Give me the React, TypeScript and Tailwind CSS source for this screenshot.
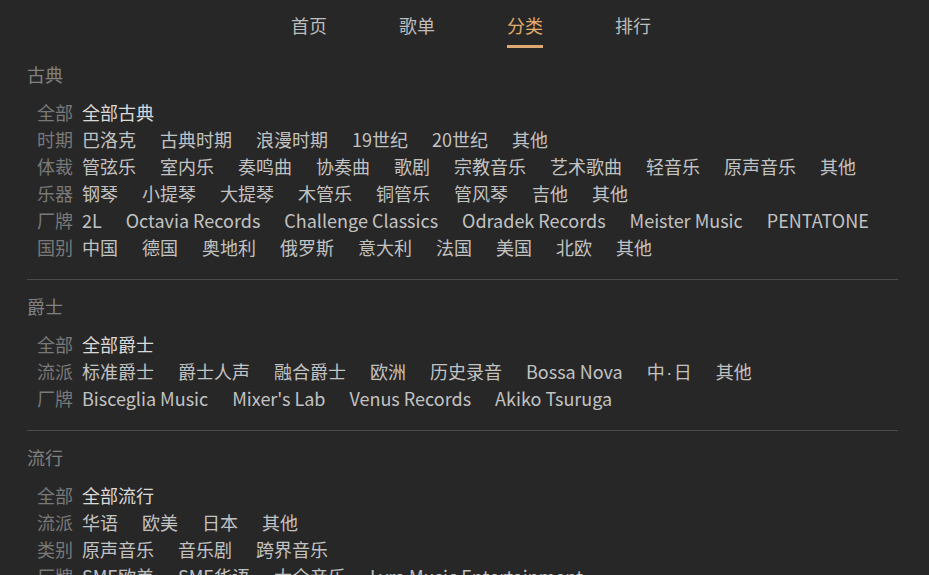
import React from "react";

type Row = { label: string; items: string[] };
type Section = { title: string; rows: Row[] };

const sections: Section[] = [
  {
    title: "古典",
    rows: [
      { label: "全部", items: ["全部古典"] },
      { label: "时期", items: ["巴洛克", "古典时期", "浪漫时期", "19世纪", "20世纪", "其他"] },
      {
        label: "体裁",
        items: ["管弦乐", "室内乐", "奏鸣曲", "协奏曲", "歌剧", "宗教音乐", "艺术歌曲", "轻音乐", "原声音乐", "其他"],
      },
      { label: "乐器", items: ["钢琴", "小提琴", "大提琴", "木管乐", "铜管乐", "管风琴", "吉他", "其他"] },
      {
        label: "厂牌",
        items: ["2L", "Octavia Records", "Challenge Classics", "Odradek Records", "Meister Music", "PENTATONE"],
      },
      { label: "国别", items: ["中国", "德国", "奥地利", "俄罗斯", "意大利", "法国", "美国", "北欧", "其他"] },
    ],
  },
  {
    title: "爵士",
    rows: [
      { label: "全部", items: ["全部爵士"] },
      { label: "流派", items: ["标准爵士", "爵士人声", "融合爵士", "欧洲", "历史录音", "Bossa Nova", "中·日", "其他"] },
      { label: "厂牌", items: ["Bisceglia Music", "Mixer's Lab", "Venus Records", "Akiko Tsuruga"] },
    ],
  },
  {
    title: "流行",
    rows: [
      { label: "全部", items: ["全部流行"] },
      { label: "流派", items: ["华语", "欧美", "日本", "其他"] },
      { label: "类别", items: ["原声音乐", "音乐剧", "跨界音乐"] },
      { label: "厂牌", items: ["SME欧美", "SME华语", "大全音乐", "Lyra Music Entertainment"] },
    ],
  },
];

const tabs = ["首页", "歌单", "分类", "排行"];

function Nav() {
  return (
    <nav className="flex justify-center gap-[72px] pl-[13px] pt-[12px]">
      {tabs.map((t) => {
        const active = t === "分类";
        return (
          <div key={t} className="flex flex-col items-center">
            <span className={active ? "text-[#e3ab6c]" : "text-[#bdbdbd]"}>{t}</span>
            <span className={"mt-[6px] h-[3px] w-full " + (active ? "bg-[#dcaa70]" : "bg-transparent")} />
          </div>
        );
      })}
    </nav>
  );
}

// the middle dot in "中·日" is a narrow latin dot, not the full-width CJK one
function ItemText({ text }: { text: string }) {
  if (!text.includes("·")) return <>{text}</>;
  const [a, b] = text.split("·");
  return (
    <>
      {a}
      <span className="mx-[1.5px] leading-[0]" style={{ fontFamily: '"Liberation Sans", sans-serif' }}>
        ·
      </span>
      {b}
    </>
  );
}

function CategorySection({ section }: { section: Section }) {
  return (
    <section className="border-b border-[#4b4b4b] pt-[13px] pb-[18px]">
      <h2 className="mb-[11px] text-[#818181]">{section.title}</h2>
      <div className="pl-[10px]">
        {section.rows.map((row) => (
          <div key={row.label} className="flex h-[27px] gap-[9px] whitespace-nowrap">
            <span className="text-[#797979]">{row.label}</span>
            <div className="flex gap-[24px]">
              {row.items.map((item, i) => (
                <span
                  key={item}
                  className={row.label === "全部" && i === 0 ? "text-[#d9d9d9]" : "text-[#c2c2c2]"}
                >
                  <ItemText text={item} />
                </span>
              ))}
            </div>
          </div>
        ))}
      </div>
    </section>
  );
}

export default function App() {
  return (
    <div
      className="min-h-screen bg-[#272727] text-[18px] leading-[27px]"
      style={{ fontFamily: '"Noto Sans CJK SC", "Noto Sans", sans-serif' }}
    >
      <Nav />
      <main className="ml-[27px] mr-[31px]">
        {sections.map((s) => (
          <CategorySection key={s.title} section={s} />
        ))}
      </main>
    </div>
  );
}
